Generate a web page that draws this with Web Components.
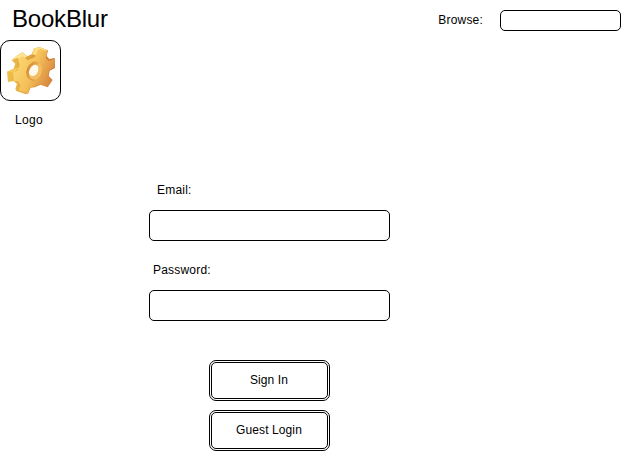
<!DOCTYPE html>
<html lang="en">
<head>
<meta charset="utf-8">
<title>BookBlur</title>
<style>
html, body { margin: 0; background: #fff; }
body { width: 622px; height: 454px; overflow: hidden; font: 12px/20px "Liberation Sans", Arial, sans-serif; color: #000; }
</style>
</head>
<body>
<book-login></book-login>
<script>
const define = (name, html) => {
  const template = document.createElement('template');
  template.innerHTML = html;
  customElements.define(name, class extends HTMLElement {
    constructor() {
      super();
      this.attachShadow({ mode: 'open' }).append(template.content.cloneNode(true));
    }
  });
};

define('text-box', `
<style>
:host { display: block; box-sizing: border-box; border: 1px solid #000; border-radius: 5px; background: #fff; }
</style>`);

define('text-label', `
<style>
:host { display: block; height: 20px; white-space: nowrap; letter-spacing: var(--track, .2px); }
</style><slot></slot>`);

define('push-button', `
<style>
:host { display: block; box-sizing: border-box; width: 121px; height: 41px; border: 1px solid #000; border-radius: 7px; padding: 1px; }
div { box-sizing: border-box; height: 37px; border: 1px solid #000; border-radius: 5px; display: flex; justify-content: center; align-items: center; padding: 0 1px 1px 0; letter-spacing: var(--track, .1px); white-space: nowrap; }
</style><div><span><slot></slot></span></div>`);

define('gear-logo', `
<style>
:host { display: block; box-sizing: border-box; width: 61px; height: 61px; border: 1px solid #000; border-radius: 10px; }
svg { display: block; margin: -1px; }
</style>
<svg width="61" height="61" viewBox="0 12 183 183" aria-hidden="true">
  <defs>
    <linearGradient id="face" gradientUnits="userSpaceOnUse" x1="45" y1="75" x2="155" y2="125">
      <stop offset="0" stop-color="#fbd973"/><stop offset=".5" stop-color="#f5c05a"/><stop offset="1" stop-color="#d88a3f"/>
    </linearGradient>
    <linearGradient id="side" x1="0" y1="0" x2="1" y2="0">
      <stop offset="0" stop-color="#efc04a"/><stop offset=".5" stop-color="#dea03c"/><stop offset="1" stop-color="#cb7733"/>
    </linearGradient>
    <linearGradient id="hole" x1="0" y1="0" x2="1" y2="0">
      <stop offset="0" stop-color="#cf8837"/><stop offset=".5" stop-color="#e9ad4c"/><stop offset="1" stop-color="#f9d27c"/>
    </linearGradient>
  </defs>
  <path fill="url(#side)" d="M50 59 67 49 82 61 95 55 101 38 117 33 144 43 140 60 148 69 164 66 165 96 149 104 146 120 158 132 143 154 122 146 105 154 92 155 84 173 76 174 49 165 46 158 51 144 41 135 24 138 21 107 41 98 46 83 35 73Z"/>
  <path fill="#ffe593" d="M35 72 50 59 67 50 82 61 64 72 52 66Z"/>
  <path fill="#ffdb80" d="M96 54 101 38 117 33 144 43 130 48 116 43 109 59Z"/>
  <path fill="#f5c85a" d="M22 107 41 98 57 94 43 111Z"/>
  <path fill="url(#face)" d="M54 69 67 59 83 73 105 63 114 43 122 39 142 47 137 66 145 75 163 69 163 94 147 102 144 121 156 133 142 152 122 143 105 151 90 153 84 173 56 163 62 148 55 136 42 135 39 111 54 103 59 86Z"/>
  <ellipse cx="102" cy="105" rx="22" ry="29" transform="rotate(22 102 105)" fill="url(#hole)"/>
  <ellipse cx="105" cy="106" rx="18" ry="25" transform="rotate(22 105 106)" fill="#f3bd62"/>
  <ellipse cx="101" cy="103" rx="13" ry="18" transform="rotate(25 101 103)" fill="#fff9ec"/>
  <path d="M113 84C96 80 84 101 84 115S94 133 104 132" fill="none" stroke="#d8963f" stroke-width="3"/>
</svg>`);

define('book-header', `
<style>
:host { display: flex; height: 40px; justify-content: space-between; align-items: flex-start; }
h1 { margin: 5px 0 0 12px; font-size: 24px; line-height: 28px; font-weight: 400; letter-spacing: -.2px; }
.browse { display: flex; padding: 10px 1px 0 0; gap: 17px; }
text-box { width: 121px; height: 21px; }
</style>
<h1>BookBlur</h1>
<div class="browse"><text-label>Browse:</text-label><text-box></text-box></div>`);

define('form-field', `
<style>
:host { display: block; height: 80px; }
text-label { margin-left: var(--indent); margin-bottom: 10px; }
text-box { width: 241px; height: 31px; }
</style>
<text-label><slot></slot></text-label><text-box></text-box>`);

define('book-login', `
<style>
:host { display: block; }
.logo { height: 140px; }
.logo text-label { margin: 9px 0 0 15px; --track: .35px; }
form { margin-left: 149px; width: 241px; }
.actions { display: grid; gap: 9px; justify-content: center; padding-top: 20px; }
</style>
<book-header></book-header>
<div class="logo"><gear-logo></gear-logo><text-label>Logo</text-label></div>
<form>
  <form-field style="--indent:8px">Email:</form-field>
  <form-field style="--indent:4px">Password:</form-field>
  <div class="actions"><push-button>Sign In</push-button><push-button>Guest Login</push-button></div>
</form>`);
</script>
</body>
</html>
